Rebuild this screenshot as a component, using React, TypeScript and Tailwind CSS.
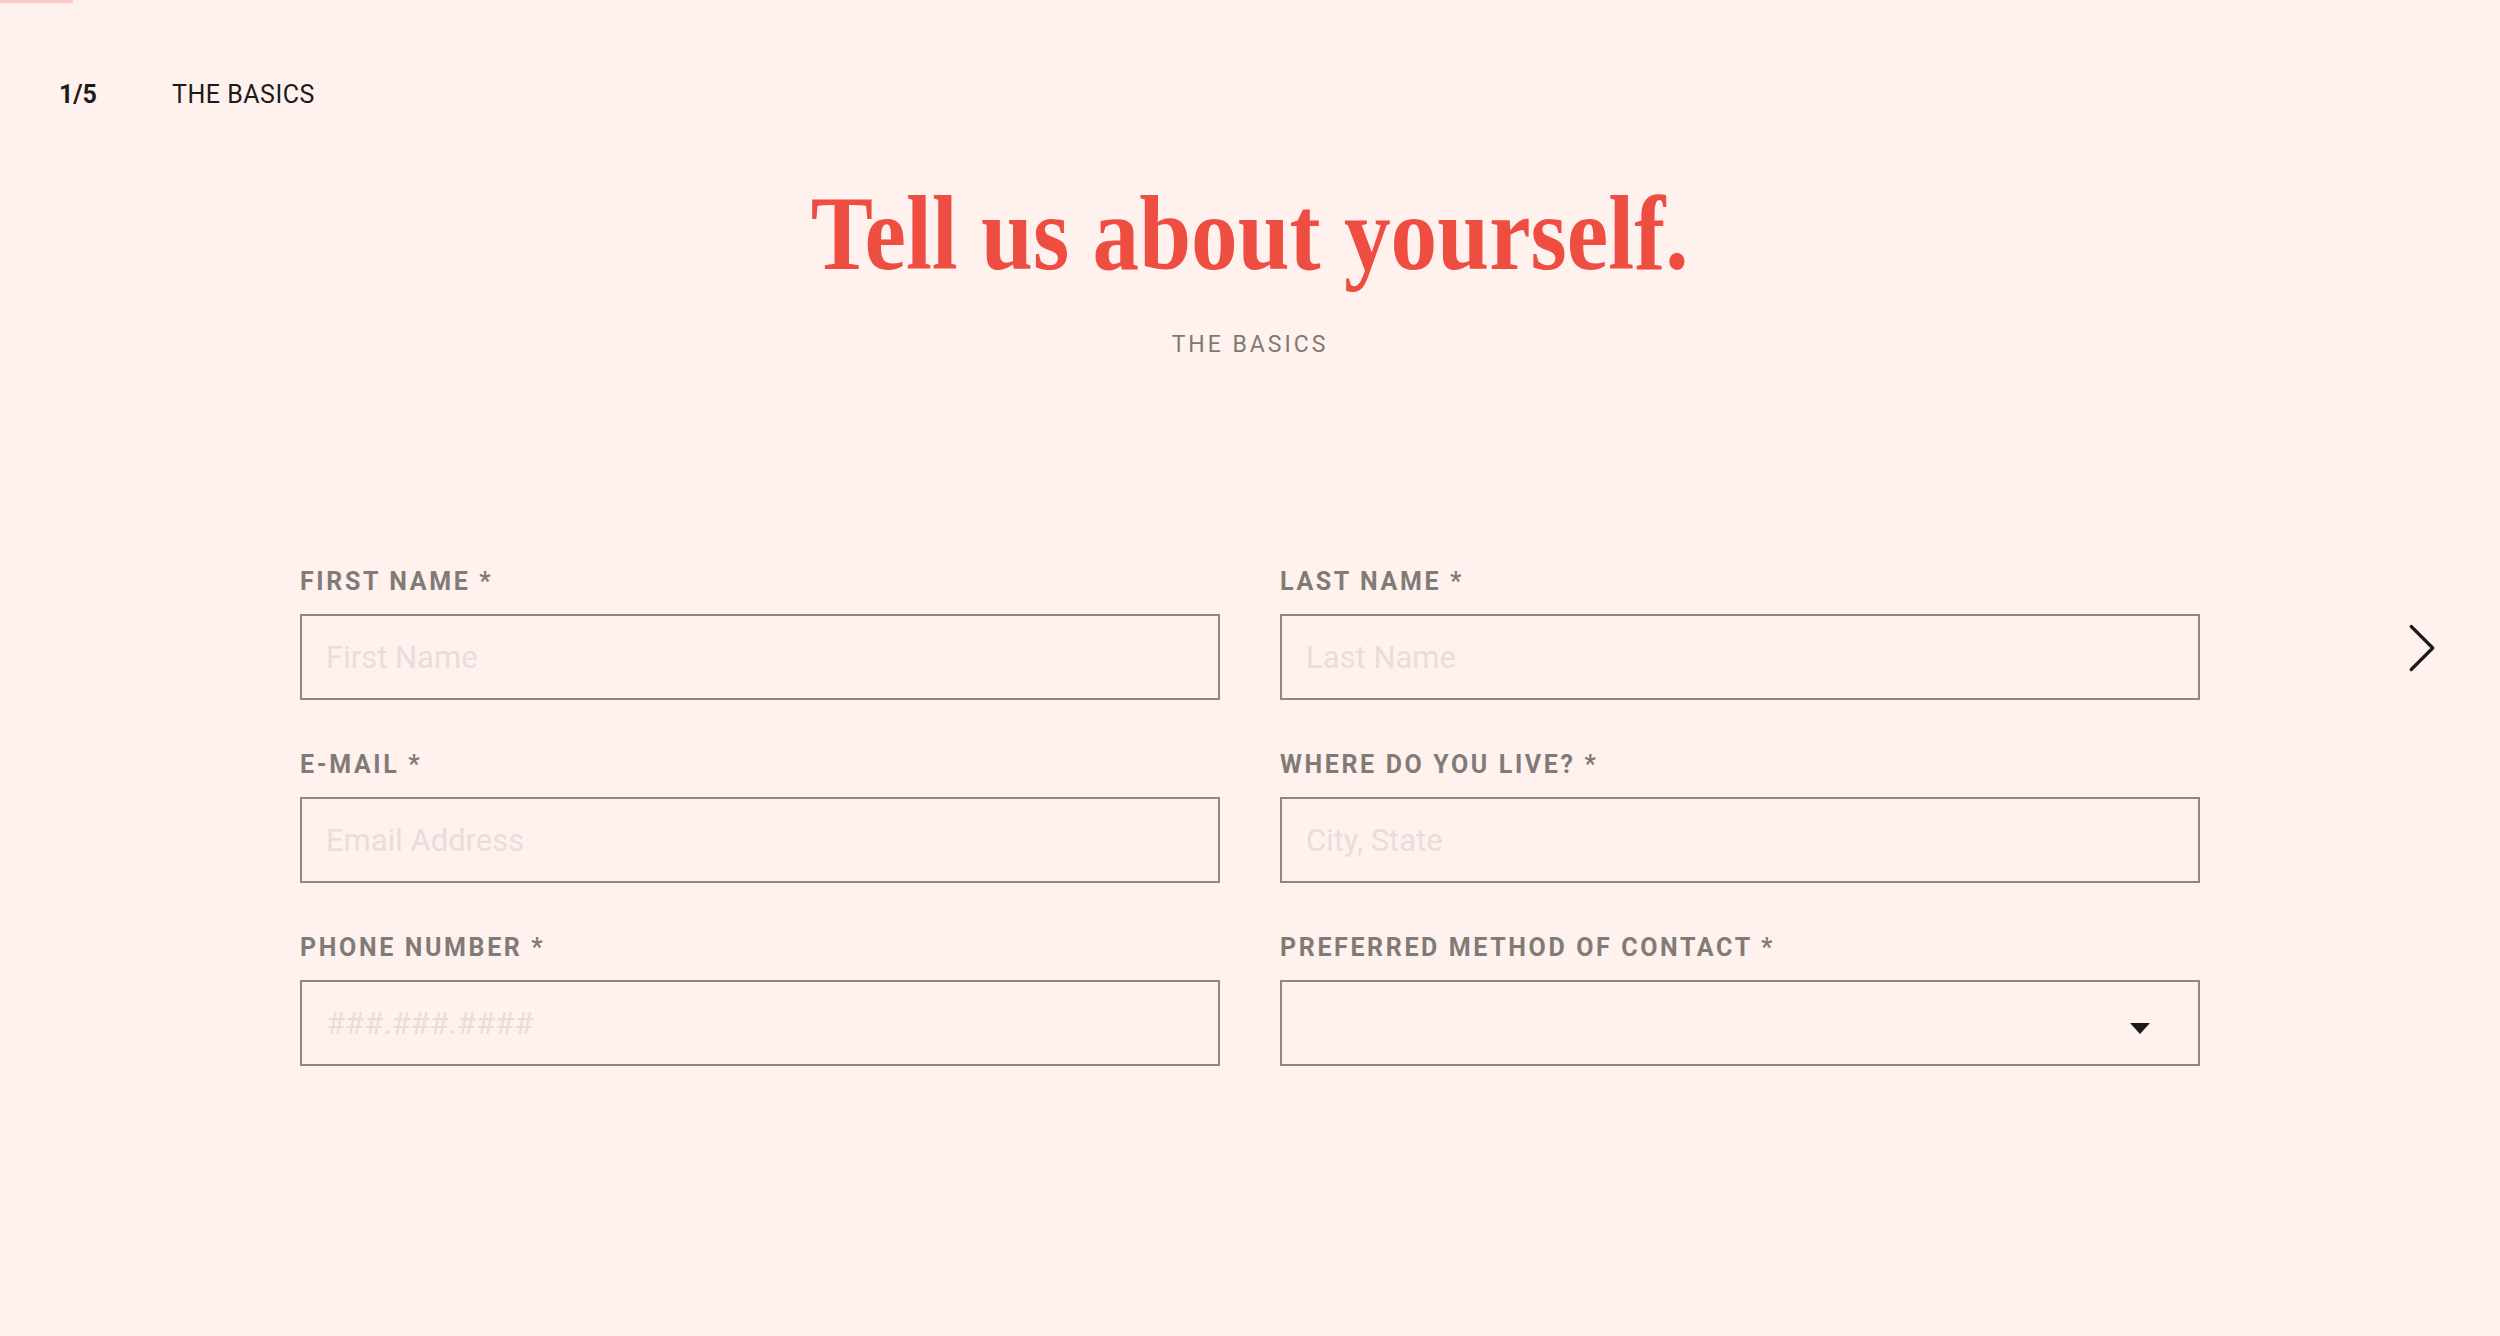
import { ChevronRight } from "lucide-react";

const FIELDS = [
  { label: "FIRST NAME *", placeholder: "First Name" },
  { label: "LAST NAME *", placeholder: "Last Name" },
  { label: "E-MAIL *", placeholder: "Email Address" },
  { label: "WHERE DO YOU LIVE? *", placeholder: "City, State" },
  { label: "PHONE NUMBER *", placeholder: "###.###.####" },
];

function Field({ label, placeholder }: { label: string; placeholder: string }) {
  return (
    <label className="flex flex-col">
      <span className="text-[25px] leading-[28px] font-bold tracking-[0.105em] text-[#817b77]">{label}</span>
      <input
        placeholder={placeholder}
        className="mt-[18px] h-[86px] border-2 border-[#8c8783] bg-transparent px-[24px] text-[31px] text-[#4a4542] placeholder:text-[#ebdcdb] outline-none"
      />
    </label>
  );
}

export default function App() {
  return (
    <div className="relative min-h-screen bg-[#fff1ee] font-['Roboto','Liberation_Sans',sans-serif]">
      {/* progress */}
      <div className="absolute left-0 top-0 h-[3px] w-[73px] bg-[#f8cbc5]" />

      <div className="flex items-center pl-[59px] pt-[81px] text-[25px] leading-[28px] text-[#1d1b1a]">
        <span className="w-[113px] font-bold">1/5</span>
        <span className="tracking-[0.02em]">THE BASICS</span>
      </div>

      <h1 className="mt-[50px] text-center font-['Liberation_Serif',serif] text-[106px] font-bold leading-[150px] text-[#ee4d42]">
        <span className="inline-block scale-x-[0.88]">Tell us about yourself.</span>
      </h1>
      <p className="mt-[22px] text-center text-[23px] leading-[28px] tracking-[0.13em] text-[#7f7975]">THE BASICS</p>

      <div className="mt-[209px] grid grid-cols-[1fr_1900px_1fr]">
        <div />
        <div className="grid grid-cols-2 gap-x-[60px] gap-y-[51px]">
          {FIELDS.map(f => (
            <Field key={f.label} {...f} />
          ))}
          <label className="flex flex-col">
            <span className="text-[25px] leading-[28px] font-bold tracking-[0.105em] text-[#817b77]">PREFERRED METHOD OF CONTACT *</span>
            <div className="relative mt-[18px] h-[86px] border-2 border-[#8c8783]">
              <select className="h-full w-full appearance-none bg-transparent px-[24px] text-[31px] outline-none">
                <option value=""></option>
                <option>E-mail</option>
                <option>Phone</option>
              </select>
              <span className="pointer-events-none absolute right-[48px] top-[41px] h-0 w-0 border-x-[10px] border-t-[11px] border-x-transparent border-t-[#1d1b1a]" />
            </div>
          </label>
        </div>
        <div className="pl-[179px] pt-[37px]">
          <ChevronRight className="h-[86px] w-[86px] text-[#1d1b1a]" strokeWidth={0.9} />
        </div>
      </div>
    </div>
  );
}
